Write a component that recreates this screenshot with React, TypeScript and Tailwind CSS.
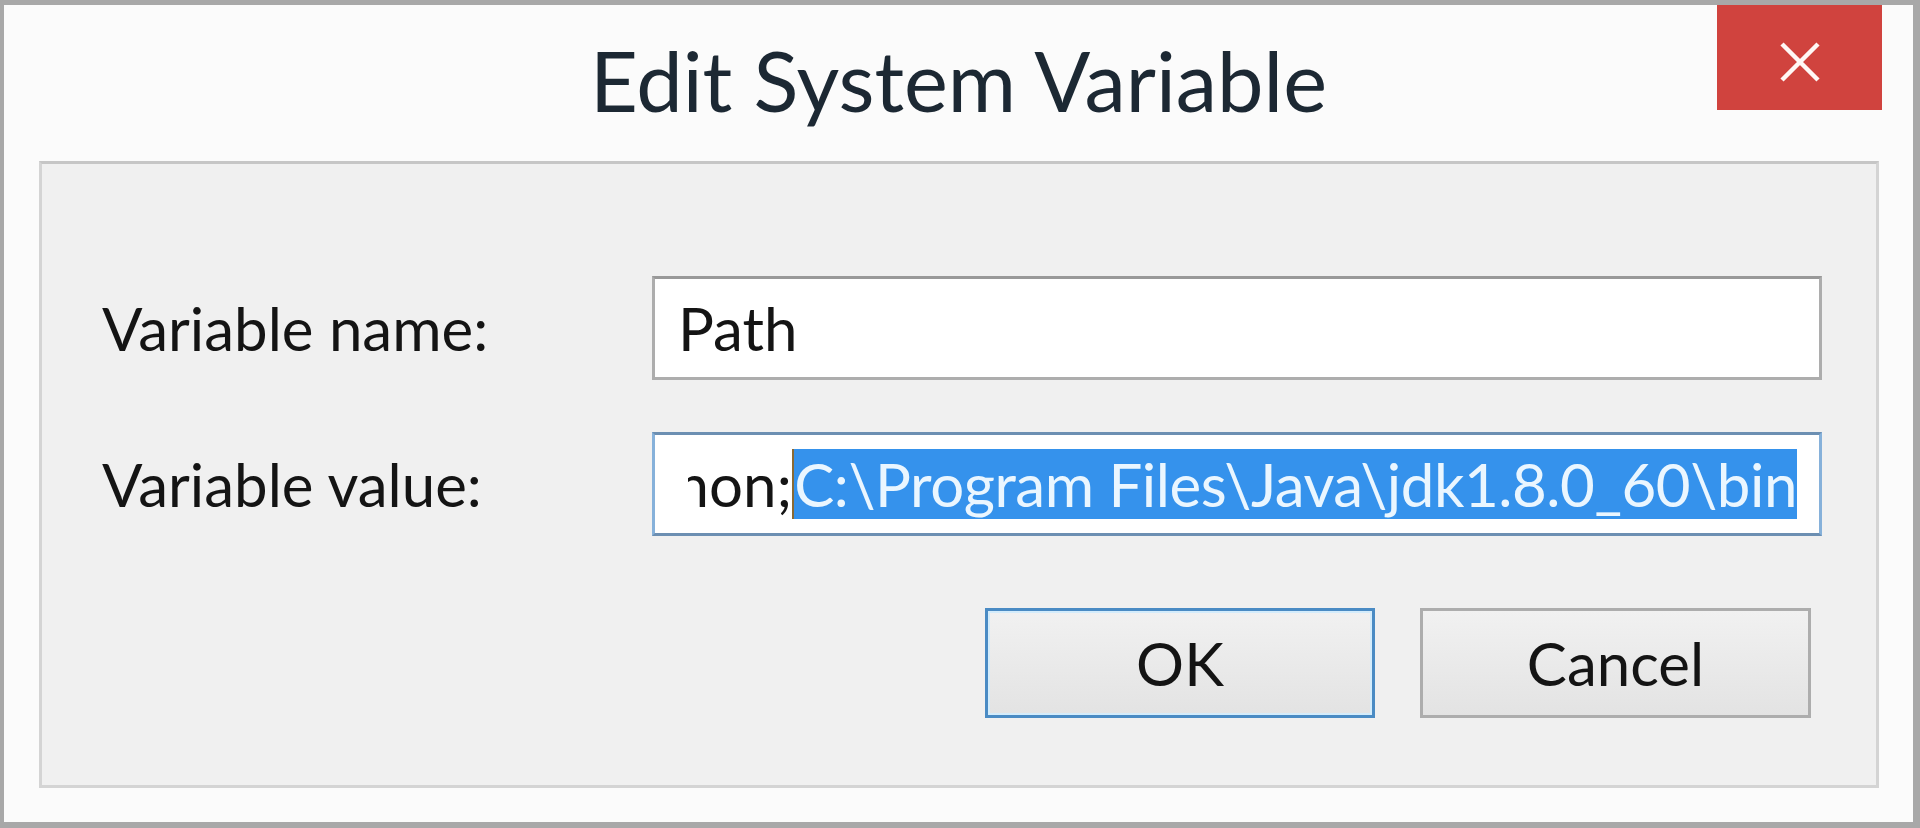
export default function App() {
  return (
    <div className="w-[1920px] h-[828px] bg-[#a8a8a8] pl-[4px] pt-[5px] pr-[7px] pb-[6px] font-[Lato,'Noto_Sans',sans-serif]">
      <div className="h-full flex flex-col bg-[#fbfbfb]">
        {/* title bar */}
        <div className="grid grid-cols-[1fr_auto_1fr] items-start h-[156px] shrink-0">
          <div />
          <h1 className="pt-[34px] text-[83px] leading-none text-[#1c2833] whitespace-nowrap">
            Edit System Variable
          </h1>
          <div className="flex justify-end pr-[31px]">
            <button className="w-[165px] h-[105px] bg-[#d0433e] flex items-center justify-center pt-[8px]">
              <svg width="44" height="42" viewBox="0 0 44 42" fill="none">
                <path d="M4 3L40 39M40 3L4 39" stroke="#fff7f5" strokeWidth="4.5" />
              </svg>
            </button>
          </div>
        </div>

        {/* content panel */}
        <div className="flex-1 ml-[35px] mr-[34px] mb-[34px] border-[3px] border-[#d4d4d4] border-t-[#c6c6c6] bg-[#f0f0f0]">
          <div className="grid grid-cols-[550px_minmax(0,1fr)] items-center gap-y-[52px] pt-[112px] pl-[60px] pr-[54px] text-[60px] leading-none text-[#141414]">
            <label>Variable name:</label>
            <div className="min-w-0 h-[104px] border-[3px] border-[#adadad] border-t-[#999999] bg-white flex items-center pl-[23px]">
              Path
            </div>

            <label>Variable value:</label>
            <div className="min-w-0 h-[104px] border-[3px] border-[#86b1da] border-t-[#6c8fb2] border-b-[#6c8fb2] bg-white flex items-center pl-[33px] pr-[22px]">
              <div className="flex-1 min-w-0 overflow-hidden flex justify-end items-center">
                <span className="shrink-0 whitespace-pre">{'C:\\Program Files\\Python;'}</span>
                <span className="shrink-0 w-[2px] h-[70px] bg-[#8a6a34]" />
                <span className="shrink-0 whitespace-pre h-[70px] leading-[70px] tracking-[-0.45px] bg-[#3592ec] text-[#eaf6ff]">
                  {'C:\\Program Files\\Java\\jdk1.8.0_60\\bin'}
                </span>
              </div>
            </div>
          </div>

          <div className="flex justify-end gap-[45px] pt-[72px] pr-[65px] text-[60px] leading-none text-[#141414]">
            <button className="w-[390px] h-[110px] border-[3px] border-[#4a8bc4] shadow-[inset_0_0_0_2px_#d4ecfb] bg-linear-to-b from-[#f1f1f1] to-[#e3e3e3] flex items-center justify-center">
              OK
            </button>
            <button className="w-[391px] h-[110px] border-[3px] border-[#adadad] bg-linear-to-b from-[#f1f1f1] to-[#e3e3e3] flex items-center justify-center">
              Cancel
            </button>
          </div>
        </div>
      </div>
    </div>
  );
}
